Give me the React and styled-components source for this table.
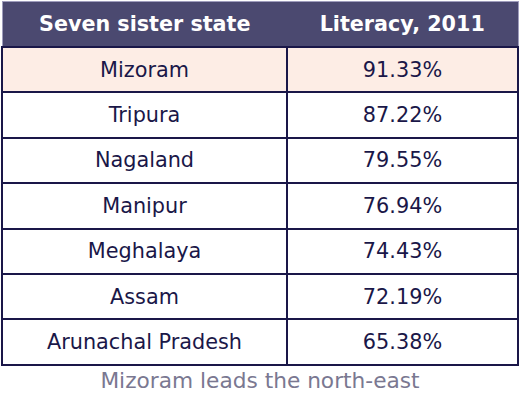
import styled, { createGlobalStyle } from "styled-components";

const GlobalStyle = createGlobalStyle`
  body {
    margin: 0;
    background: #ffffff;
    font-family: "DejaVu Sans", "Liberation Sans", sans-serif;
  }
`;

const Wrapper = styled.div`
  width: 520px;
  padding: 1px 1px 0 1px;
  box-sizing: border-box;
`;

const Tabela = styled.table`
  width: 518px;
  border-collapse: collapse;
  table-layout: fixed;
`;

const Cabecalho = styled.th`
  background-color: #4b4970;
  color: #ffffff;
  font-size: 20.7px;
  font-weight: bold;
  height: 44px;
  padding: 0;
  border-top: 1px solid #9f9dbd;
  border-bottom: 2px solid #1a1748;
  text-align: center;

  &:first-child {
    border-left: 1px solid #9f9dbd;
  }

  &:last-child {
    border-right: 1px solid #9f9dbd;
  }
`;

const Celula = styled.td`
  background-color: ${({ $destaque }) => ($destaque ? "#fdede5" : "#ffffff")};
  color: #1a1748;
  font-size: 20.8px;
  height: 43.4px;
  padding: 0;
  border: 2px solid #1a1748;
  text-align: center;
`;

const Legenda = styled.p`
  margin: 2px 0 0 0;
  text-align: center;
  color: #7a7891;
  font-size: 21.7px;
`;

const estados = [
  ["Mizoram", "91.33%"],
  ["Tripura", "87.22%"],
  ["Nagaland", "79.55%"],
  ["Manipur", "76.94%"],
  ["Meghalaya", "74.43%"],
  ["Assam", "72.19%"],
  ["Arunachal Pradesh", "65.38%"],
];

function App() {
  return (
    <>
      <GlobalStyle />
      <Wrapper>
        <Tabela>
          <colgroup>
            <col style={{ width: "285px" }} />
            <col />
          </colgroup>
          <thead>
            <tr>
              <Cabecalho>Seven sister state</Cabecalho>
              <Cabecalho>Literacy, 2011</Cabecalho>
            </tr>
          </thead>
          <tbody>
            {estados.map(([nome, taxa], i) => (
              <tr key={nome}>
                <Celula $destaque={i === 0}>{nome}</Celula>
                <Celula $destaque={i === 0}>{taxa}</Celula>
              </tr>
            ))}
          </tbody>
        </Tabela>
        <Legenda>Mizoram leads the north-east</Legenda>
      </Wrapper>
    </>
  );
}

export default App;
